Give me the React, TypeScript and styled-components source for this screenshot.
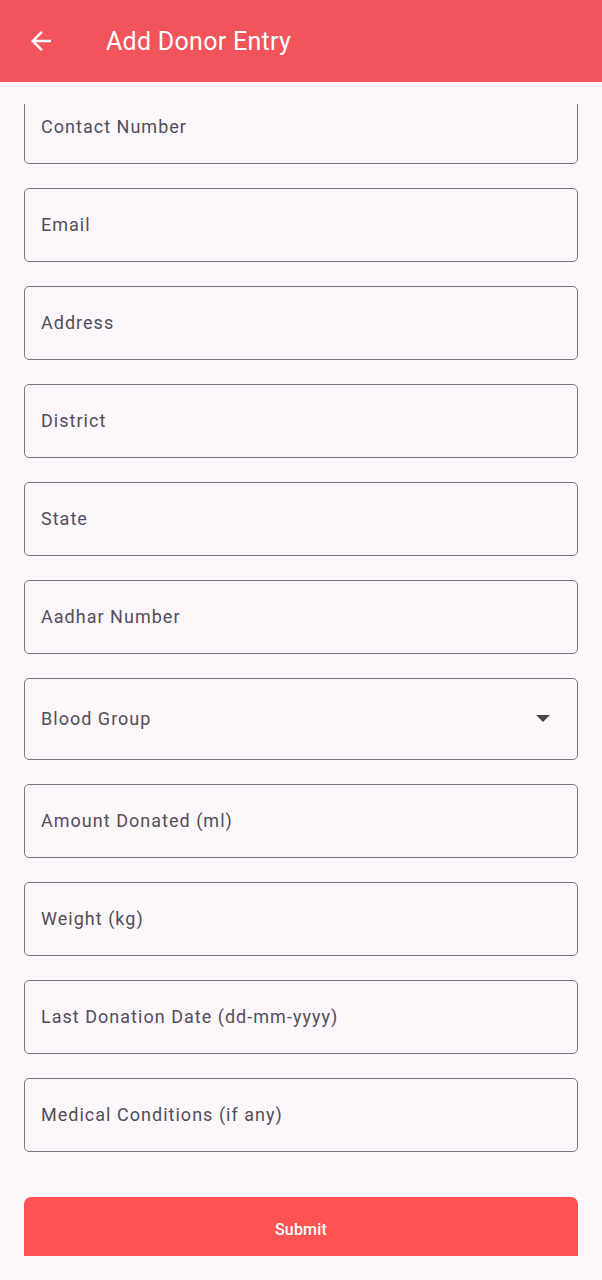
import React from "react";
import styled, { createGlobalStyle } from "styled-components";

const Global = createGlobalStyle`
  html, body { margin: 0; padding: 0; background: #FDF7FC; }
  body { font-family: Roboto, "Noto Sans", sans-serif; }
`;

const Page = styled.div`
  width: 602px;
  height: 1280px;
  display: flex;
  flex-direction: column;
  background: #FDF7FC;
  overflow: hidden;
`;

const Header = styled.header`
  height: 82px;
  flex: none;
  background: #F2545B;
  display: flex;
  align-items: center;
  padding-left: 26px;
  gap: 50px;
  box-sizing: border-box;
`;

const BackButton = styled.button`
  width: 30px;
  height: 30px;
  padding: 0;
  border: none;
  background: transparent;
  display: flex;
  align-items: center;
  justify-content: center;
  color: #fff;
`;

const Title = styled.h1`
  margin: 0;
  font-family: Roboto, sans-serif;
  font-weight: 400;
  font-size: 25px;
  color: #fff;
  letter-spacing: 0.28px;
`;

const Viewport = styled.div`
  margin-top: 22px;
  height: 1152px;
  flex: none;
  overflow: hidden;
`;

const Form = styled.form`
  margin-top: -14px;
  padding: 0 24px;
  display: flex;
  flex-direction: column;
  gap: 24px;
`;

const Field = styled.div<{ $tall?: boolean }>`
  height: ${(p) => (p.$tall ? 82 : 74)}px;
  box-sizing: border-box;
  border: 1.3px solid #7B7580;
  border-radius: 5px;
  display: flex;
  align-items: center;
  justify-content: space-between;
  padding: 0 27px 2px 16px;
`;

const Label = styled.span`
  font-family: Roboto, sans-serif;
  font-size: 18px;
  font-weight: 400;
  letter-spacing: 1.02px;
  color: #524D58;
`;

const Caret = styled.span`
  width: 0;
  height: 0;
  border-left: 7px solid transparent;
  border-right: 7px solid transparent;
  border-top: 7px solid #49454F;
`;

const Submit = styled.button`
  margin-top: 21px;
  height: 72px;
  border: none;
  border-radius: 7px;
  background: #FF5252;
  color: #fff;
  font-family: Roboto, sans-serif;
  font-size: 16px;
  font-weight: 500;
  letter-spacing: 0.2px;
  display: flex;
  justify-content: center;
  padding-top: 23px;
  box-sizing: border-box;
`;

const fields = [
  "Contact Number",
  "Email",
  "Address",
  "District",
  "State",
  "Aadhar Number",
];
const fields2 = [
  "Amount Donated (ml)",
  "Weight (kg)",
  "Last Donation Date (dd-mm-yyyy)",
  "Medical Conditions (if any)",
];

export default function App() {
  return (
    <Page>
      <Global />
      <Header>
        <BackButton aria-label="Back">
          <svg width="30" height="30" viewBox="0 0 24 24" fill="#fff">
            <path d="M20 11H7.83l5.59-5.59L12 4l-8 8 8 8 1.41-1.41L7.83 13H20v-2z" />
          </svg>
        </BackButton>
        <Title>Add Donor Entry</Title>
      </Header>
      <Viewport>
        <Form>
          {fields.map((f) => (
            <Field key={f}>
              <Label>{f}</Label>
            </Field>
          ))}
          <Field $tall>
            <Label>Blood Group</Label>
            <Caret />
          </Field>
          {fields2.map((f) => (
            <Field key={f}>
              <Label>{f}</Label>
            </Field>
          ))}
          <Submit type="button">Submit</Submit>
        </Form>
      </Viewport>
    </Page>
  );
}
